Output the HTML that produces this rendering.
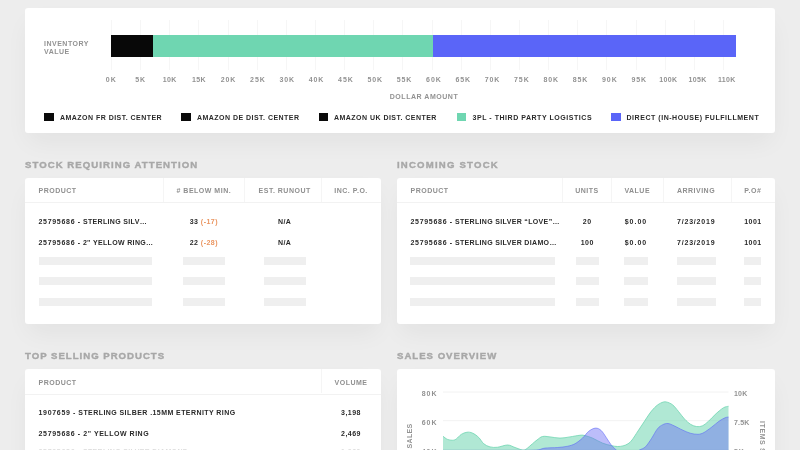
<!DOCTYPE html>
<html><head><meta charset="utf-8"><title>Inventory Dashboard</title>
<style>
html,body{margin:0;padding:0}
body{width:800px;height:450px;overflow:hidden;background:#ededed;position:relative;font-family:"Liberation Sans",sans-serif;-webkit-font-smoothing:antialiased;filter:grayscale(0)}
.card{position:absolute;background:#fff;border-radius:3px;box-shadow:0 12px 24px -4px rgba(0,0,0,0.055)}
.gl{position:absolute;top:19.5px;width:1px;height:50.5px;background:#f6f6f6}
.tk{position:absolute;top:75px;width:40px;text-align:center;font-size:7px;letter-spacing:0.9px;color:#929292;font-weight:bold;line-height:9px;text-indent:0.9px}
.iv{position:absolute;left:44px;top:39.8px;font-size:7px;letter-spacing:0.5px;color:#929292;font-weight:bold;line-height:7.75px}
.da{position:absolute;left:374px;width:100px;text-align:center;top:91.8px;font-size:7px;letter-spacing:0.53px;color:#929292;font-weight:bold;line-height:9px}
.sq{position:absolute;top:112.5px;width:9.5px;height:8.5px}
.lt{position:absolute;top:112.5px;font-size:7px;letter-spacing:0.47px;color:#2b2b2b;font-weight:bold;line-height:9px;white-space:nowrap}
.h{position:absolute;font-size:9.6px;letter-spacing:1.1px;color:#a8a8a8;-webkit-text-stroke:0.4px #a8a8a8;font-weight:bold;line-height:12px;white-space:nowrap}
.hl{position:absolute;left:0;right:0;height:1px;background:#f2f2f2}
.sh{position:absolute;left:0;width:100%;height:0}
.vl{position:absolute;top:0;height:24.6px;width:1px;background:#f5f5f5}
.th{position:absolute;top:8.4px;font-size:7px;letter-spacing:0.5px;color:#8f8f8f;font-weight:bold;line-height:9px;white-space:nowrap}
.td{position:absolute;font-size:7px;letter-spacing:0.47px;color:#2a2a2a;font-weight:bold;line-height:12px;white-space:nowrap}
.c{text-align:center}
.d{letter-spacing:0.7px}
.w{letter-spacing:0.34px}
.n{letter-spacing:0.9px;text-indent:0.9px}
.or{color:#ea9560}
.ph{position:absolute;height:8px;background:#efefef}
.ax{position:absolute;font-size:7px;letter-spacing:0.9px;color:#929292;font-weight:bold;line-height:9px;white-space:nowrap}
</style></head><body>
<div class="card" style="left:25px;top:8px;width:749.5px;height:125.4px">
</div>
<div style="position:absolute;left:0;top:0;width:800px;height:140px">
<div class="gl" style="left:111.00px"></div><div class="gl" style="left:140.14px"></div><div class="gl" style="left:169.28px"></div><div class="gl" style="left:198.42px"></div><div class="gl" style="left:227.56px"></div><div class="gl" style="left:256.70px"></div><div class="gl" style="left:285.84px"></div><div class="gl" style="left:314.98px"></div><div class="gl" style="left:344.12px"></div><div class="gl" style="left:373.26px"></div><div class="gl" style="left:402.40px"></div><div class="gl" style="left:431.54px"></div><div class="gl" style="left:460.68px"></div><div class="gl" style="left:489.82px"></div><div class="gl" style="left:518.96px"></div><div class="gl" style="left:548.10px"></div><div class="gl" style="left:577.24px"></div><div class="gl" style="left:606.38px"></div><div class="gl" style="left:635.52px"></div><div class="gl" style="left:664.66px"></div><div class="gl" style="left:693.80px"></div><div class="gl" style="left:722.94px"></div>

<div style="position:absolute;left:153px;top:35px;width:281px;height:22px;background:#6fd6b1"></div>
<div style="position:absolute;left:432.5px;top:35px;width:303.5px;height:22px;background:#5a65f8"></div>
<div style="position:absolute;left:111px;top:35px;width:42.2px;height:22px;background:#080808"></div>
<div class="iv">INVENTORY<br>VALUE</div>
<div class="tk" style="left:90.80px;letter-spacing:0.9px;text-indent:0.9px">0K</div><div class="tk" style="left:120.13px;letter-spacing:0.9px;text-indent:0.9px">5K</div><div class="tk" style="left:149.46px;letter-spacing:0.35px;text-indent:0.35px">10K</div><div class="tk" style="left:178.79px;letter-spacing:0.35px;text-indent:0.35px">15K</div><div class="tk" style="left:208.12px;letter-spacing:0.9px;text-indent:0.9px">20K</div><div class="tk" style="left:237.45px;letter-spacing:0.9px;text-indent:0.9px">25K</div><div class="tk" style="left:266.78px;letter-spacing:0.9px;text-indent:0.9px">30K</div><div class="tk" style="left:296.11px;letter-spacing:0.9px;text-indent:0.9px">40K</div><div class="tk" style="left:325.44px;letter-spacing:0.9px;text-indent:0.9px">45K</div><div class="tk" style="left:354.77px;letter-spacing:0.9px;text-indent:0.9px">50K</div><div class="tk" style="left:384.10px;letter-spacing:0.9px;text-indent:0.9px">55K</div><div class="tk" style="left:413.43px;letter-spacing:0.9px;text-indent:0.9px">60K</div><div class="tk" style="left:442.76px;letter-spacing:0.9px;text-indent:0.9px">65K</div><div class="tk" style="left:472.09px;letter-spacing:0.9px;text-indent:0.9px">70K</div><div class="tk" style="left:501.42px;letter-spacing:0.9px;text-indent:0.9px">75K</div><div class="tk" style="left:530.75px;letter-spacing:0.9px;text-indent:0.9px">80K</div><div class="tk" style="left:560.08px;letter-spacing:0.9px;text-indent:0.9px">85K</div><div class="tk" style="left:589.41px;letter-spacing:0.9px;text-indent:0.9px">90K</div><div class="tk" style="left:618.74px;letter-spacing:0.9px;text-indent:0.9px">95K</div><div class="tk" style="left:648.07px;letter-spacing:0.35px;text-indent:0.35px">100K</div><div class="tk" style="left:677.40px;letter-spacing:0.35px;text-indent:0.35px">105K</div><div class="tk" style="left:706.73px;letter-spacing:0.35px;text-indent:0.35px">110K</div>
<div class="da">DOLLAR AMOUNT</div>
<div class="sq" style="left:44px;background:#0a0a0a"></div><div class="lt" style="left:60px;letter-spacing:0.47px">AMAZON FR DIST. CENTER</div><div class="sq" style="left:181.25px;background:#0a0a0a"></div><div class="lt" style="left:197px;letter-spacing:0.47px">AMAZON DE DIST. CENTER</div><div class="sq" style="left:318.75px;background:#0a0a0a"></div><div class="lt" style="left:334px;letter-spacing:0.47px">AMAZON UK DIST. CENTER</div><div class="sq" style="left:456.5px;background:#6fd6b1"></div><div class="lt" style="left:472.5px;letter-spacing:0.54px">3PL - THIRD PARTY LOGISTICS</div><div class="sq" style="left:611px;background:#5a65f8"></div><div class="lt" style="left:626.5px;letter-spacing:0.54px">DIRECT (IN-HOUSE) FULFILLMENT</div>
</div>
<div class="h" style="left:25px;top:158.5px;letter-spacing:1.05px">STOCK REQUIRING ATTENTION</div>
<div class="h" style="left:397px;top:158.5px;letter-spacing:1.2px">INCOMING STOCK</div>
<div class="card" style="left:25px;top:177.6px;width:356px;height:146px"><div class="hl" style="top:24.4px"></div><div class="vl" style="left:137.5px"></div><div class="vl" style="left:219.2px"></div><div class="vl" style="left:295.5px"></div><div class="sh" style="top:0.4px"><div class="th" style="left:13.5px">PRODUCT</div><div class="th c" style="left:138px;width:81.7px">#&nbsp;BELOW MIN.</div><div class="th c" style="left:221.5px;width:76.3px">EST. RUNOUT</div><div class="th c" style="left:296px;width:60px">INC. P.O.</div><div class="td" style="left:13.5px;top:37.7px"><span class="d">25795686</span> - <span class="w">STERLING SILV…</span></div><div class="td c" style="left:138px;width:81.7px;top:37.7px">33 <span class="or">(-17)</span></div><div class="td c" style="left:221.5px;width:76.3px;top:37.7px">N/A</div><div class="td" style="left:13.5px;top:58.900000000000006px"><span class="d">25795686</span> - <span class="w">2" YELLOW RING…</span></div><div class="td c" style="left:138px;width:81.7px;top:58.900000000000006px">22 <span class="or">(-28)</span></div><div class="td c" style="left:221.5px;width:76.3px;top:58.900000000000006px">N/A</div><div class="ph" style="left:13.5px;width:113.5px;top:79px"></div><div class="ph" style="left:157.8px;width:42.5px;top:79px"></div><div class="ph" style="left:238.75px;width:42.25px;top:79px"></div><div class="ph" style="left:13.5px;width:113.5px;top:99.5px"></div><div class="ph" style="left:157.8px;width:42.5px;top:99.5px"></div><div class="ph" style="left:238.75px;width:42.25px;top:99.5px"></div><div class="ph" style="left:13.5px;width:113.5px;top:120px"></div><div class="ph" style="left:157.8px;width:42.5px;top:120px"></div><div class="ph" style="left:238.75px;width:42.25px;top:120px"></div></div></div>
<div class="card" style="left:397px;top:177.6px;width:377.5px;height:146px"><div class="hl" style="top:24.4px"></div><div class="vl" style="left:165.0px"></div><div class="vl" style="left:214.0px"></div><div class="vl" style="left:265.5px"></div><div class="vl" style="left:333.5px"></div><div class="sh" style="top:0.4px"><div class="th" style="left:13.5px">PRODUCT</div><div class="th c" style="left:165.5px;width:49.0px">UNITS</div><div class="th c" style="left:214.5px;width:51.5px">VALUE</div><div class="th c" style="left:265px;width:68px">ARRIVING</div><div class="th c" style="left:334px;width:43.5px">P.O#</div><div class="td" style="left:13.5px;top:37.7px"><span class="d">25795686</span> - <span class="w">STERLING SILVER “LOVE”…</span></div><div class="td c" style="left:165.5px;width:49.0px;top:37.7px;letter-spacing:0.47px;text-indent:0.47px">20</div><div class="td c" style="left:212.7px;width:51.5px;top:37.7px;letter-spacing:1.0px;text-indent:1.0px">$0.00</div><div class="td c" style="left:264.8px;width:68px;top:37.7px;letter-spacing:0.8px;text-indent:0.8px">7/23/2019</div><div class="td c" style="left:334px;width:43.5px;top:37.7px;letter-spacing:0.47px;text-indent:0.47px">1001</div><div class="td" style="left:13.5px;top:58.900000000000006px"><span class="d">25795686</span> - <span class="w">STERLING SILVER DIAMO…</span></div><div class="td c" style="left:165.5px;width:49.0px;top:58.900000000000006px;letter-spacing:0.47px;text-indent:0.47px">100</div><div class="td c" style="left:212.7px;width:51.5px;top:58.900000000000006px;letter-spacing:1.0px;text-indent:1.0px">$0.00</div><div class="td c" style="left:264.8px;width:68px;top:58.900000000000006px;letter-spacing:0.8px;text-indent:0.8px">7/23/2019</div><div class="td c" style="left:334px;width:43.5px;top:58.900000000000006px;letter-spacing:0.47px;text-indent:0.47px">1001</div><div class="ph" style="left:13px;width:145px;top:79px"></div><div class="ph" style="left:178.6px;width:23.400000000000006px;top:79px"></div><div class="ph" style="left:227.4px;width:23.599999999999994px;top:79px"></div><div class="ph" style="left:280px;width:38.60000000000002px;top:79px"></div><div class="ph" style="left:346.75px;width:17.25px;top:79px"></div><div class="ph" style="left:13px;width:145px;top:99.5px"></div><div class="ph" style="left:178.6px;width:23.400000000000006px;top:99.5px"></div><div class="ph" style="left:227.4px;width:23.599999999999994px;top:99.5px"></div><div class="ph" style="left:280px;width:38.60000000000002px;top:99.5px"></div><div class="ph" style="left:346.75px;width:17.25px;top:99.5px"></div><div class="ph" style="left:13px;width:145px;top:120px"></div><div class="ph" style="left:178.6px;width:23.400000000000006px;top:120px"></div><div class="ph" style="left:227.4px;width:23.599999999999994px;top:120px"></div><div class="ph" style="left:280px;width:38.60000000000002px;top:120px"></div><div class="ph" style="left:346.75px;width:17.25px;top:120px"></div></div></div>
<div class="h" style="left:25px;top:350px;letter-spacing:1.0px">TOP SELLING PRODUCTS</div>
<div class="h" style="left:397px;top:350px;letter-spacing:1.0px">SALES OVERVIEW</div>
<div class="card" style="left:25px;top:368.9px;width:356px;height:146px"><div class="hl" style="top:24.8px"></div><div class="vl" style="left:295.5px"></div><div class="sh" style="top:0.3px"><div class="th" style="left:13.5px">PRODUCT</div><div class="th c" style="left:296px;width:60px">VOLUME</div><div class="td" style="left:13.5px;top:37.7px;letter-spacing:0.47px"><span class="d">1907659</span> - <span class="w" style="letter-spacing:0.43px">STERLING SILBER .15MM ETERNITY RING</span></div><div class="td c" style="left:296px;width:60px;top:37.7px">3,198</div><div class="td" style="left:13.5px;top:58.349999999999994px;letter-spacing:0.62px"><span class="d">25795686</span> - <span class="w" style="letter-spacing:0.53px">2" YELLOW RING</span></div><div class="td c" style="left:296px;width:60px;top:58.349999999999994px">2,469</div><div class="td" style="left:13.5px;top:77.19999999999999px;letter-spacing:0.47px;color:#dcdcdc"><span class="d">25795686</span> - <span class="w">STERLING SILVER DIAMOND</span></div><div class="td c" style="left:296px;width:60px;top:77.19999999999999px;color:#dcdcdc">1,920</div></div></div>
<div class="card" style="left:397px;top:368.9px;width:377.5px;height:146px"></div>
<svg width="800" height="450" viewBox="0 0 800 450" style="position:absolute;left:0;top:0">
<line x1="443" x2="728.5" y1="392" y2="392" stroke="#f2f2f2" stroke-width="1"/>
<line x1="443" x2="728.5" y1="420.7" y2="420.7" stroke="#f2f2f2" stroke-width="1"/>
<line x1="443" x2="728.5" y1="449.4" y2="449.4" stroke="#f2f2f2" stroke-width="1"/>
<path d="M443,436.25 C443.8,436.8 445.9,438.7 447.5,439.4 C449.1,440.1 451.0,440.3 452.5,440.25 C454.0,440.2 454.8,440.0 456.25,439 C457.7,438.0 459.5,435.5 461.25,434.4 C463.0,433.3 465.0,432.5 466.9,432.25 C468.8,432.0 470.5,432.2 472.5,433.1 C474.5,434.0 476.9,435.7 478.75,437.5 C480.6,439.3 481.9,442.2 483.75,443.75 C485.6,445.3 487.7,446.3 490,446.9 C492.3,447.5 494.6,447.6 497.5,447.25 C500.4,446.9 504.6,445.0 507.5,445 C510.4,445.0 512.5,446.7 515,447.5 C517.5,448.3 520.6,449.8 522.5,450 C524.4,450.2 524.6,450.0 526.25,449 C527.9,448.0 530.7,445.2 532.5,443.75 C534.3,442.2 535.3,441.2 537,440 C538.7,438.8 540.3,437.0 542.5,436.5 C544.7,436.0 547.1,436.6 550,436.9 C552.9,437.2 556.7,438.1 560,438.1 C563.3,438.1 566.7,437.4 570,436.9 C573.3,436.4 577.5,435.5 580,435.25 C582.5,435.0 582.9,435.1 585,435.6 C587.1,436.1 589.6,436.9 592.5,438.1 C595.4,439.4 599.4,441.9 602.5,443.1 C605.6,444.4 608.8,445.0 611.25,445.6 C613.8,446.2 615.5,446.4 617.5,446.5 C619.5,446.6 621.2,446.3 623,445.9 C624.8,445.4 626.5,444.8 628,443.8 C629.5,442.8 630.3,442.1 632,440 C633.7,437.9 636.0,434.0 638,431 C640.0,428.0 642.0,425.0 644,422 C646.0,419.0 648.0,415.6 650,413 C652.0,410.4 654.0,408.0 656,406.25 C658.0,404.5 660.2,403.2 662,402.5 C663.8,401.8 664.8,401.6 666.5,402 C668.2,402.4 670.5,403.2 672.5,404.75 C674.5,406.3 676.5,409.1 678.5,411.5 C680.5,413.9 682.5,416.9 684.5,419 C686.5,421.1 688.5,423.0 690.5,424.25 C692.5,425.5 694.5,426.2 696.5,426.5 C698.5,426.8 700.5,426.6 702.5,425.75 C704.5,424.9 706.2,423.2 708.5,421.25 C710.8,419.2 713.5,416.0 716,413.75 C718.5,411.5 721.4,409.0 723.5,407.75 C725.6,406.5 727.7,406.5 728.5,406.25 L728.5,460 L443,460 Z" fill="#6fd6b1" fill-opacity="0.55"/>
<path d="M443,436.25 C443.8,436.8 445.9,438.7 447.5,439.4 C449.1,440.1 451.0,440.3 452.5,440.25 C454.0,440.2 454.8,440.0 456.25,439 C457.7,438.0 459.5,435.5 461.25,434.4 C463.0,433.3 465.0,432.5 466.9,432.25 C468.8,432.0 470.5,432.2 472.5,433.1 C474.5,434.0 476.9,435.7 478.75,437.5 C480.6,439.3 481.9,442.2 483.75,443.75 C485.6,445.3 487.7,446.3 490,446.9 C492.3,447.5 494.6,447.6 497.5,447.25 C500.4,446.9 504.6,445.0 507.5,445 C510.4,445.0 512.5,446.7 515,447.5 C517.5,448.3 520.6,449.8 522.5,450 C524.4,450.2 524.6,450.0 526.25,449 C527.9,448.0 530.7,445.2 532.5,443.75 C534.3,442.2 535.3,441.2 537,440 C538.7,438.8 540.3,437.0 542.5,436.5 C544.7,436.0 547.1,436.6 550,436.9 C552.9,437.2 556.7,438.1 560,438.1 C563.3,438.1 566.7,437.4 570,436.9 C573.3,436.4 577.5,435.5 580,435.25 C582.5,435.0 582.9,435.1 585,435.6 C587.1,436.1 589.6,436.9 592.5,438.1 C595.4,439.4 599.4,441.9 602.5,443.1 C605.6,444.4 608.8,445.0 611.25,445.6 C613.8,446.2 615.5,446.4 617.5,446.5 C619.5,446.6 621.2,446.3 623,445.9 C624.8,445.4 626.5,444.8 628,443.8 C629.5,442.8 630.3,442.1 632,440 C633.7,437.9 636.0,434.0 638,431 C640.0,428.0 642.0,425.0 644,422 C646.0,419.0 648.0,415.6 650,413 C652.0,410.4 654.0,408.0 656,406.25 C658.0,404.5 660.2,403.2 662,402.5 C663.8,401.8 664.8,401.6 666.5,402 C668.2,402.4 670.5,403.2 672.5,404.75 C674.5,406.3 676.5,409.1 678.5,411.5 C680.5,413.9 682.5,416.9 684.5,419 C686.5,421.1 688.5,423.0 690.5,424.25 C692.5,425.5 694.5,426.2 696.5,426.5 C698.5,426.8 700.5,426.6 702.5,425.75 C704.5,424.9 706.2,423.2 708.5,421.25 C710.8,419.2 713.5,416.0 716,413.75 C718.5,411.5 721.4,409.0 723.5,407.75 C725.6,406.5 727.7,406.5 728.5,406.25" fill="none" stroke="#6fd6b1" stroke-opacity="0.8" stroke-width="1"/>
<path d="M443,450.4 C449.2,450.4 468.0,450.4 480,450.4 C492.0,450.4 506.7,450.4 515,450.4 C523.3,450.4 526.0,450.4 530,450.3 C534.0,450.2 536.2,450.2 538.75,449.8 C541.2,449.4 541.9,448.5 545,448.1 C548.1,447.7 553.8,447.8 557.5,447.5 C561.2,447.2 564.6,446.9 567.5,446.25 C570.4,445.6 572.5,445.1 575,443.75 C577.5,442.4 580.2,440.2 582.5,438.1 C584.8,436.0 586.6,432.9 588.75,431.25 C590.9,429.6 593.5,428.2 595.6,428.1 C597.7,428.0 599.5,429.0 601.25,430.6 C603.0,432.2 604.6,435.1 606.25,437.5 C607.9,439.9 609.6,442.9 611.25,445 C612.9,447.1 614.5,448.5 616.25,450 C618.0,451.5 619.4,453.3 622,454 C624.6,454.7 629.1,454.7 632,454 C634.9,453.3 637.2,451.2 639.5,450 C641.8,448.8 643.5,448.7 645.5,446.75 C647.5,444.8 649.5,441.5 651.5,438.5 C653.5,435.5 655.6,431.1 657.5,428.75 C659.4,426.4 661.0,425.6 662.75,424.7 C664.5,423.8 666.1,423.3 668,423.5 C669.9,423.7 671.5,424.6 674,425.75 C676.5,426.9 680.2,429.0 683,430.25 C685.8,431.5 688.0,432.6 690.5,433.25 C693.0,433.9 695.8,434.4 698,434.3 C700.2,434.2 701.8,433.7 704,432.5 C706.2,431.3 709.0,429.1 711.5,427.25 C714.0,425.4 716.8,422.8 719,421.25 C721.2,419.7 723.4,418.5 725,417.8 C726.6,417.1 727.9,417.1 728.5,417 L728.5,460 L443,460 Z" fill="#6b6cf5" fill-opacity="0.45"/>
<path d="M443,450.4 C449.2,450.4 468.0,450.4 480,450.4 C492.0,450.4 506.7,450.4 515,450.4 C523.3,450.4 526.0,450.4 530,450.3 C534.0,450.2 536.2,450.2 538.75,449.8 C541.2,449.4 541.9,448.5 545,448.1 C548.1,447.7 553.8,447.8 557.5,447.5 C561.2,447.2 564.6,446.9 567.5,446.25 C570.4,445.6 572.5,445.1 575,443.75 C577.5,442.4 580.2,440.2 582.5,438.1 C584.8,436.0 586.6,432.9 588.75,431.25 C590.9,429.6 593.5,428.2 595.6,428.1 C597.7,428.0 599.5,429.0 601.25,430.6 C603.0,432.2 604.6,435.1 606.25,437.5 C607.9,439.9 609.6,442.9 611.25,445 C612.9,447.1 614.5,448.5 616.25,450 C618.0,451.5 619.4,453.3 622,454 C624.6,454.7 629.1,454.7 632,454 C634.9,453.3 637.2,451.2 639.5,450 C641.8,448.8 643.5,448.7 645.5,446.75 C647.5,444.8 649.5,441.5 651.5,438.5 C653.5,435.5 655.6,431.1 657.5,428.75 C659.4,426.4 661.0,425.6 662.75,424.7 C664.5,423.8 666.1,423.3 668,423.5 C669.9,423.7 671.5,424.6 674,425.75 C676.5,426.9 680.2,429.0 683,430.25 C685.8,431.5 688.0,432.6 690.5,433.25 C693.0,433.9 695.8,434.4 698,434.3 C700.2,434.2 701.8,433.7 704,432.5 C706.2,431.3 709.0,429.1 711.5,427.25 C714.0,425.4 716.8,422.8 719,421.25 C721.2,419.7 723.4,418.5 725,417.8 C726.6,417.1 727.9,417.1 728.5,417" fill="none" stroke="#5a65f8" stroke-opacity="0.55" stroke-width="1"/>
</svg>
<div class="ax" style="left:421.8px;top:388.7px">80K</div>
<div class="ax" style="left:421.8px;top:417.8px">60K</div>
<div class="ax" style="left:421.8px;top:446.5px">40K</div>
<div class="ax" style="left:734px;top:389.2px;letter-spacing:0.2px">10K</div>
<div class="ax" style="left:734px;top:417.8px;letter-spacing:0.2px">7.5K</div>
<div class="ax" style="left:734px;top:446.5px">5K</div>
<div class="ax" style="left:408.7px;top:435.6px;width:0;height:0"><div style="position:absolute;left:0;top:0;transform:translate(-50%,-50%) rotate(-90deg);line-height:9px;letter-spacing:0.3px">SALES</div></div>
<div class="ax" style="left:762.3px;top:420.7px;width:0;height:0"><div style="position:absolute;left:0;top:0;transform-origin:0 0;transform:rotate(90deg) translate(0,-50%);line-height:9px;letter-spacing:0.6px">ITEMS SOLD</div></div>
</body></html>
